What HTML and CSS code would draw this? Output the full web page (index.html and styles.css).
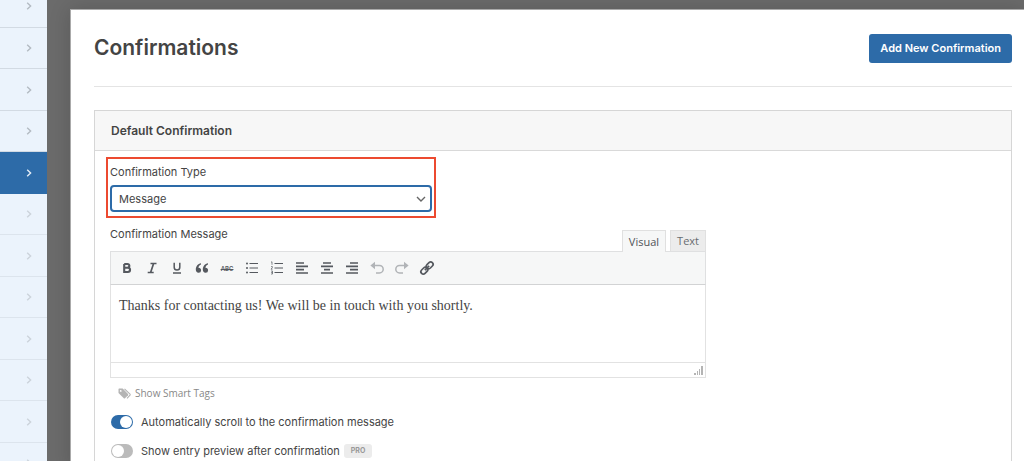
FILE: index.html
```
<!DOCTYPE html>
<html lang="en">
<head>
<meta charset="utf-8">
<title>Confirmations</title>
<link rel="stylesheet" href="styles.css">
</head>
<body>
<svg class="defs" width="0" height="0" aria-hidden="true">
  <symbol id="chev" viewBox="0 0 8 8"><path d="M2.200 .8 5.600 4 2.200 7.200" fill="none" stroke="currentColor" stroke-width="1.400"/></symbol>
</svg>
<nav class="sidebar" aria-label="Settings">
  <a class="item first" href="#" aria-label="Section 1"><svg><use href="#chev"/></svg></a>
  <a class="item" href="#" aria-label="Section 2"><svg><use href="#chev"/></svg></a>
  <a class="item" href="#" aria-label="Section 3"><svg><use href="#chev"/></svg></a>
  <a class="item" href="#" aria-label="Section 4"><svg><use href="#chev"/></svg></a>
  <a class="item active" href="#" aria-label="Confirmations"><svg><use href="#chev"/></svg></a>
  <a class="item dim" href="#" aria-label="Section 6"><svg><use href="#chev"/></svg></a>
  <a class="item dim" href="#" aria-label="Section 7"><svg><use href="#chev"/></svg></a>
  <a class="item dim" href="#" aria-label="Section 8"><svg><use href="#chev"/></svg></a>
  <a class="item dim" href="#" aria-label="Section 9"><svg><use href="#chev"/></svg></a>
  <a class="item dim" href="#" aria-label="Section 10"><svg><use href="#chev"/></svg></a>
  <a class="item dim" href="#" aria-label="Section 11"><svg><use href="#chev"/></svg></a>
  <a class="item dim" href="#" aria-label="Section 12"><svg><use href="#chev"/></svg></a>
</nav>
<main class="panel">
  <header class="head">
    <h1>Confirmations</h1>
    <button class="add" type="button">Add New Confirmation</button>
  </header>
  <section class="card">
    <h2>Default Confirmation</h2>
    <div class="body">
      <div class="highlight">
        <label for="type">Confirmation Type</label>
        <div class="selectwrap">
          <select id="type"><option>Message</option></select>
          <svg class="caret" viewBox="0 0 10 6"><path d="M1 1 5 5 9 1" fill="none" stroke="currentColor" stroke-width="1.4"/></svg>
        </div>
      </div>
      <div class="editor">
        <div class="edhead">
          <label for="message">Confirmation Message</label>
          <div class="tabs">
            <button type="button" class="tab on">Visual</button>
            <button type="button" class="tab">Text</button>
          </div>
        </div>
        <div class="toolbar">
          <button type="button" aria-label="Bold"><svg viewBox="0 0 14 14"><path d="M4.200 3v8h3.700a2.150 2.150 0 0 0 0-4.300H4.200M7.500 6.700a1.850 1.850 0 0 0 0-3.700H4.200" fill="none" stroke="currentColor" stroke-width="2.100"/></svg></button>
          <button type="button" aria-label="Italic"><svg viewBox="0 0 14 14"><path d="M5.500 2.500h6M2.700 11.500h6M8.600 2.500 5.600 11.500" fill="none" stroke="currentColor" stroke-width="1.700"/></svg></button>
          <button type="button" aria-label="Underline"><svg viewBox="0 0 14 14"><path d="M4.200 1.800v4.500a2.800 2.800 0 0 0 5.600 0V1.800M3 12h8" fill="none" stroke="currentColor" stroke-width="1.500"/></svg></button>
          <button type="button" aria-label="Quote"><svg viewBox="0 0 14 14"><g fill="currentColor"><path d="M6 2.200C3 2.700.8 5 .8 8.500c0 2 1 3.200 2.700 3.200A2.500 2.500 0 0 0 6.100 9.200C6.100 7.700 5 6.700 3.400 6.800 3.600 5.200 4.600 4 6 3.400z"/><path d="M13 2.200C10 2.700 7.800 5 7.800 8.500c0 2 1 3.200 2.700 3.200a2.500 2.500 0 0 0 2.600-2.500c0-1.500-1.100-2.500-2.700-2.400.2-1.600 1.200-2.800 2.600-3.400z"/></g></svg></button>
          <button type="button" class="strike" aria-label="Strikethrough"><s>ABC</s></button>
          <button type="button" aria-label="Bulleted list"><svg viewBox="0 0 14 14"><path d="M4.500 2.500H13M4.500 7H13M4.500 11.500H13" stroke="currentColor" stroke-width="1"/><g fill="currentColor"><circle cx="2" cy="2.500" r="1"/><circle cx="2" cy="7" r="1"/><circle cx="2" cy="11.500" r="1"/></g></svg></button>
          <button type="button" aria-label="Numbered list"><svg viewBox="0 0 14 14"><path d="M4.500 2.500H13M4.500 7H13M4.500 11.500H13" stroke="currentColor"/><path d="M1 1.200 2 .8v3M1 5.600h1.400v1L1 8.200h1.500M1 10h1.500v3H1M1.200 11.500h1.300" fill="none" stroke="currentColor" stroke-width=".7"/></svg></button>
          <button type="button" aria-label="Align left"><svg viewBox="0 0 14 14"><path d="M1 2h8M1 5.300h12M1 8.600h8M1 12h12" stroke="currentColor" stroke-width="1.700"/></svg></button>
          <button type="button" aria-label="Align center"><svg viewBox="0 0 14 14"><path d="M3 2h8M1 5.300h12M4 8.600h6M1 12h12" stroke="currentColor" stroke-width="1.700"/></svg></button>
          <button type="button" aria-label="Align right"><svg viewBox="0 0 14 14"><path d="M5 2h8M1 5.300h12M5 8.600h8M1 12h12" stroke="currentColor" stroke-width="1.700"/></svg></button>
          <button type="button" class="off" aria-label="Undo"><svg viewBox="0 0 14 14"><path d="M3.500 4.500h6a3.700 3.700 0 0 1 0 7.400H6" fill="none" stroke="currentColor" stroke-width="1.500"/><path d="M5 .8v7.400L.4 4.500z" fill="currentColor"/></svg></button>
          <button type="button" class="off" aria-label="Redo"><svg viewBox="0 0 14 14"><path d="M10.500 4.500h-6a3.700 3.700 0 0 0 0 7.400H8" fill="none" stroke="currentColor" stroke-width="1.500"/><path d="M9 .8v7.400l4.600-3.700z" fill="currentColor"/></svg></button>
          <button type="button" aria-label="Link"><svg viewBox="0 0 14 14"><g transform="rotate(-45 7 7)" fill="none" stroke="currentColor" stroke-width="1.700"><rect x="-.6" y="4.600" width="7.600" height="4.800" rx="2.400"/><rect x="7" y="4.600" width="7.600" height="4.800" rx="2.400"/><path d="M4 7h6"/></g></svg></button>
        </div>
        <textarea id="message" spellcheck="false">Thanks for contacting us! We will be in touch with you shortly.</textarea>
        <div class="status"><svg viewBox="0 0 9 9"><path d="M7 0h2v9H7zM5 3h1v6H5zM3 5h1v4H3zM0 7h2v2H0z" fill="currentColor"/></svg></div>
      </div>
      <a class="smart" href="#"><svg viewBox="0 0 13 11"><path d="M.5 1v4l5.300 5.300q.6.500 1.200 0l3-3q.5-.6 0-1.200L4.700.6H1z" fill="currentColor"/><circle cx="2.700" cy="2.900" r=".9" fill="#fff"/><path d="M6.500.8 12 6.200q.4.500 0 1L9 10.300" fill="none" stroke="currentColor" stroke-width="1.100"/></svg>Show Smart Tags</a>
      <label class="toggle"><input type="checkbox" role="switch" checked>Automatically scroll to the confirmation message</label>
      <label class="toggle"><input type="checkbox" role="switch">Show entry preview after confirmation<span class="pro">PRO</span></label>
    </div>
  </section>
</main>
</body>
</html>
```
FILE: styles.css
```
* { box-sizing: border-box; }
body {
  margin: 0;
  display: flex;
  height: 100vh;
  overflow: hidden;
  background: #6b6b6b;
  color: #444;
  font: 11px/16px Inter, "Liberation Sans", sans-serif;
}
button, select { font: inherit; color: inherit; }
.defs { position: absolute; }

.sidebar { flex: 0 0 47px; background: #ebf3fc; }
.item {
  display: flex;
  align-items: center;
  justify-content: flex-end;
  height: 42px;
  padding-right: 14px;
  border-bottom: 1px solid #d2dae3;
  color: #b3bac2;
}
.item:nth-child(even) { height: 41px; }
.item svg { width: 8px; height: 8px; }
.item.first { height: 28px; align-items: flex-start; padding-top: 2px; }
.item.active { background: #2d6ba8; border-color: #2d6ba8; color: #e4edf6; }
.item.dim { color: #ccd3db; border-color: #dce4ed; }

.panel {
  flex: 1;
  align-self: flex-start;
  min-height: 100vh;
  margin: 9px 0 0 23px;
  padding: 23px 12px 0 23px;
  background: #fff;
  border: 1px solid #aaa;
  border-right: 0;
  box-shadow: 0 0 20px rgba(0, 0, 0, .16);
}
.head {
  display: flex;
  align-items: center;
  justify-content: space-between;
  padding-bottom: 23px;
  border-bottom: 1px solid #e4e4e4;
}
h1 { margin: 0; font-size: 21px; line-height: 30px; font-weight: 600; }
.add {
  height: 29px;
  padding: 0 11px;
  border: 0;
  border-radius: 3px;
  background: #2d6ba8;
  color: #fff;
  font-weight: 600;
}

.card { margin-top: 23px; border: 1px solid #d6d6d6; }
h2 {
  margin: 0;
  padding: 0 16px;
  background: #f7f7f7;
  border-bottom: 1px solid #d9d9d9;
  font-size: 12px;
  line-height: 39px;
  font-weight: 600;
}
.body { padding: 6px 15px; }
.highlight {
  width: 330px;
  margin-left: -4px;
  padding: 5px 2px 4px;
  border: 2px solid #ec4a30;
}
.highlight label { display: block; margin-bottom: 5px; }
.selectwrap { display: grid; align-items: center; }
.selectwrap > * { grid-area: 1 / 1; }
select {
  appearance: none;
  width: 100%;
  height: 27px;
  padding: 0 7px;
  border: 2px solid #2d6ba8;
  border-radius: 4px;
  background: #fff;
}
.caret { justify-self: end; width: 10px; height: 6px; margin-right: 6px; color: #666; pointer-events: none; }

.editor { max-width: 596px; margin-top: 8px; }
.edhead { display: flex; justify-content: space-between; align-items: flex-start; }
.tabs { display: flex; gap: 4px; margin-top: 4px; }
.tab {
  height: 21px;
  padding: 0 6px;
  border: 1px solid #e0e0e0;
  border-bottom: 0;
  background: #ececec;
  color: #686c70;
  font-family: "Open Sans", sans-serif;
}
.tab.on { height: 22px; margin-bottom: -1px; background: #f6f7f7; color: #505458; position: relative; }
.toolbar {
  display: flex;
  align-items: center;
  gap: 11px;
  height: 34px;
  padding: 0 9px;
  border: 1px solid #dfe0e1;
  border-bottom-color: #d2d3d4;
  background: #f6f7f7;
}
.toolbar button {
  display: grid;
  place-items: center;
  width: 14px;
  height: 14px;
  padding: 0;
  border: 0;
  background: none;
  color: #55595f;
}
.toolbar svg { width: 14px; height: 14px; overflow: visible; }
.toolbar .off { color: #b1b4b7; }
.toolbar .strike { font-size: 6px; font-weight: 600; }
textarea {
  display: block;
  width: 100%;
  height: 78px;
  padding: 12px 8px;
  border: solid #e2e2e2;
  border-width: 0 1px 1px;
  resize: none;
  color: #444;
  font: 14px/18px Georgia, "Liberation Serif", serif;
}
.status {
  display: flex;
  justify-content: flex-end;
  align-items: flex-end;
  height: 15px;
  padding: 2px;
  border: 1px solid #e2e2e2;
  border-top: 0;
  color: #b4b4b4;
}
.status svg { width: 9px; height: 9px; }
.smart {
  display: flex;
  align-items: center;
  gap: 4px;
  width: max-content;
  margin: 7px 0 0 8px;
  color: #888;
  font-family: "Open Sans", sans-serif;
  font-size: 10px;
  text-decoration: none;
}
.smart svg { width: 13px; height: 11px; color: #b4b4b4; }
.toggle { display: flex; align-items: center; margin-top: 13px; }
.toggle input {
  appearance: none;
  display: flex;
  align-items: center;
  width: 22px;
  height: 14px;
  margin: 0 8px 0 1px;
  padding: 1px;
  border-radius: 7px;
  background: #bbb;
}
.toggle input::before { content: ""; width: 12px; height: 12px; border-radius: 50%; background: #fff; }
.toggle input:checked { justify-content: flex-end; background: #2d6ba8; }
.pro {
  margin-left: 4px;
  padding: 0 7px;
  border-radius: 3px;
  background: #ececec;
  color: #999;
  font-size: 7px;
  line-height: 14px;
  font-weight: 700;
}
```
